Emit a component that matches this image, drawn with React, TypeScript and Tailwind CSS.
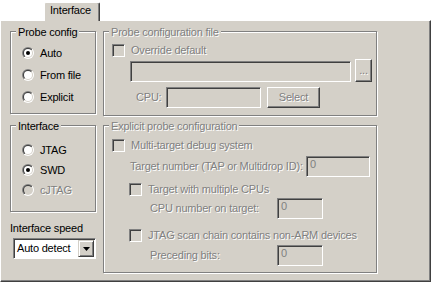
import React from "react";

const dis = "text-[#808080] [text-shadow:1px_1px_0_#fff]";
const sunken =
  "border border-t-[#808080] border-l-[#808080] border-r-white border-b-white shadow-[inset_1px_1px_0_#404040]";
const raised =
  "border border-t-white border-l-white border-r-[#404040] border-b-[#404040] shadow-[inset_-1px_-1px_0_#808080]";

function Radio({ checked, disabled }: { checked?: boolean; disabled?: boolean }) {
  return (
    <svg width="12" height="12" viewBox="0 0 12 12" className="shrink-0">
      <defs>
        <linearGradient id="rOuter" x1="0" y1="0" x2="1" y2="1">
          <stop offset="0.5" stopColor="#808080" />
          <stop offset="0.5" stopColor="#ffffff" />
        </linearGradient>
        <linearGradient id="rInner" x1="0" y1="0" x2="1" y2="1">
          <stop offset="0.5" stopColor="#404040" />
          <stop offset="0.5" stopColor="#d4d0c8" />
        </linearGradient>
      </defs>
      <circle cx="6" cy="6" r="6" fill="url(#rOuter)" />
      <circle cx="6" cy="6" r="5" fill="url(#rInner)" />
      <circle cx="6" cy="6" r="4" fill={disabled ? "#d4d0c8" : "#ffffff"} />
      {checked && <circle cx="6" cy="6" r="2" fill={disabled ? "#808080" : "#000"} />}
    </svg>
  );
}

function Check() {
  return <div className={`w-[13px] h-[13px] shrink-0 bg-[#d4d0c8] ${sunken}`} />;
}

function Group({
  label,
  className,
  children,
  disabled,
}: {
  label: string;
  className: string;
  children?: React.ReactNode;
  disabled?: boolean;
}) {
  return (
    <div
      className={`relative border border-[#808080] shadow-[inset_1px_1px_0_#fff,1px_1px_0_#fff] ${className}`}
    >
      <span
        className={`absolute left-[5px] top-[-6px] px-[2px] bg-[#d4d0c8] whitespace-nowrap ${
          disabled ? dis : "text-black"
        }`}
      >
        {label}
      </span>
      {children}
    </div>
  );
}

function Field({ w, value }: { w: string; value?: string }) {
  return (
    <div className={`h-[21px] ${w} bg-[#d4d0c8] ${sunken} pl-[3px] pt-[1px] text-[#808080] shrink-0`}>
      {value}
    </div>
  );
}

function RadioRow({
  label,
  checked,
  disabled,
  h,
}: {
  label: string;
  checked?: boolean;
  disabled?: boolean;
  h: string;
}) {
  return (
    <div className={`flex items-center gap-[6px] ${h}`}>
      <Radio checked={checked} disabled={disabled} />
      <span className={disabled ? dis : "text-black"}>{label}</span>
    </div>
  );
}

export default function App() {
  return (
    <div className="w-[431px] h-[283px] bg-white text-[11px] leading-[13px] tracking-[-0.2px] font-['Liberation_Sans',Arial,sans-serif] select-none">
      {/* tab row */}
      <div className="h-[20px] flex items-end pl-[44px]">
        <div className="relative z-10 -mb-px h-[19px] w-[56px] bg-[#d4d0c8] border-t border-l border-t-white border-l-white border-r border-r-[#404040] shadow-[inset_-1px_0_0_#808080] rounded-t-[2px] pl-[5px] pt-[1px] text-black">
          Interface
        </div>
      </div>

      {/* panel */}
      <div className="h-[262px] w-[431px] bg-[#d4d0c8] border-t border-l border-t-white border-l-white border-r border-b border-r-[#404040] border-b-[#404040] shadow-[inset_-1px_-1px_0_#808080] flex gap-[7px] pl-[9px] pt-[10px]">
        {/* left column */}
        <div className="w-[86px] flex flex-col">
          <Group label="Probe config" className="h-[83px] pl-[11px] pt-[10px]">
            <RadioRow label="Auto" checked h="h-[22px]" />
            <RadioRow label="From file" h="h-[22px]" />
            <RadioRow label="Explicit" h="h-[22px]" />
          </Group>

          <Group label="Interface" className="mt-[11px] h-[87px] pl-[11px] pt-[14px]">
            <RadioRow label="JTAG" h="h-[20px]" />
            <RadioRow label="SWD" checked h="h-[20px]" />
            <RadioRow label="cJTAG" disabled h="h-[20px]" />
          </Group>

          <div className="mt-[10px] text-black whitespace-nowrap">Interface speed</div>
          <div className={`mt-[3px] ml-[3px] w-[83px] h-[21px] bg-white ${sunken} p-[1px] flex`}>
            <div className="flex-1 pl-[2px] pt-[2px] text-black whitespace-nowrap">Auto detect</div>
            <div className="w-[16px] h-full border border-t-[#d4d0c8] border-l-[#d4d0c8] border-r-[#404040] border-b-[#404040] shadow-[inset_1px_1px_0_#fff,inset_-1px_-1px_0_#808080] bg-[#d4d0c8] flex items-center justify-center">
              <svg width="7" height="4" viewBox="0 0 7 4">
                <path d="M0 0H7L3.5 4Z" fill="#000" />
              </svg>
            </div>
          </div>
        </div>

        {/* right column */}
        <div className="w-[274px] flex flex-col">
          <Group label="Probe configuration file" disabled className="h-[85px] pt-[12px]">
            <div className="flex items-center h-[13px] pl-[8px] gap-[6px]">
              <Check />
              <span className={dis}>Override default</span>
            </div>
            <div className="flex items-end mt-[2px] h-[23px] pl-[26px] gap-[4px]">
              <Field w="w-[221px]" />
              <div className={`w-[17px] h-[23px] ${raised} flex items-center justify-center ${dis} leading-[11px]`}>
                ...
              </div>
            </div>
            <div className="flex items-center mt-[5px] h-[21px] pl-[32px]">
              <span className={`w-[30px] ${dis}`}>CPU:</span>
              <Field w="w-[95px]" />
              <div className={`ml-[6px] w-[53px] h-[21px] ${raised} flex items-center justify-center ${dis}`}>
                Select
              </div>
            </div>
          </Group>

          <Group label="Explicit probe configuration" disabled className="mt-[9px] h-[148px] pt-[13px]">
            <div className="flex items-center h-[13px] pl-[8px] gap-[6px]">
              <Check />
              <span className={dis}>Multi-target debug system</span>
            </div>
            <div className="flex items-center mt-[4px] h-[21px] pl-[26px]">
              <span className={`w-[176px] whitespace-nowrap ${dis}`}>Target number (TAP or Multidrop ID):</span>
              <Field w="w-[64px]" value="0" />
            </div>
            <div className="flex items-center mt-[6px] h-[13px] pl-[25px] gap-[6px]">
              <Check />
              <span className={dis}>Target with multiple CPUs</span>
            </div>
            <div className="flex items-center mt-[2px] h-[21px] pl-[46px]">
              <span className={`w-[127px] whitespace-nowrap ${dis}`}>CPU number on target:</span>
              <Field w="w-[46px]" value="0" />
            </div>
            <div className="flex items-center mt-[10px] h-[13px] pl-[25px] gap-[6px]">
              <Check />
              <span className={`whitespace-nowrap ${dis}`}>JTAG scan chain contains non-ARM devices</span>
            </div>
            <div className="flex items-center mt-[3px] h-[21px] pl-[46px]">
              <span className={`w-[127px] whitespace-nowrap ${dis}`}>Preceding bits:</span>
              <Field w="w-[46px]" value="0" />
            </div>
          </Group>
        </div>
      </div>
    </div>
  );
}
